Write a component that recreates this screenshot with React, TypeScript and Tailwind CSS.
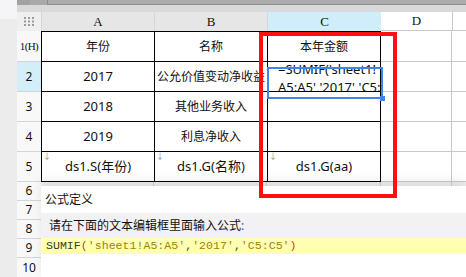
import React from 'react';

const rowHeights = [31, 30, 30, 30, 30];

function GridDots() {
    return (
        <svg width="11" height="9" viewBox="0 0 11 9">
            {[0, 4, 8].map((x) =>
                [0, 3.5, 7].map((y) => <rect key={`${x}-${y}`} x={x} y={y} width="2" height="2" fill="#9a9a9a" />)
            )}
        </svg>
    );
}

function DownMark() {
    return <span className="absolute left-[1px] top-0 text-[8px] leading-none text-[#8a8a8a]">↓</span>;
}

export default function App() {
    const headerFont = { fontFamily: '"Liberation Serif", serif' };

    const tabela = [
        ['年份', '名称', '本年金额'],
        ['2017', '公允价值变动净收益', ''],
        ['2018', '其他业务收入', ''],
        ['2019', '利息净收入', ''],
        ['ds1.S(年份)', 'ds1.G(名称)', 'ds1.G(aa)'],
    ];

    return (
        <div
            className="relative flex h-[277px] w-[466px] overflow-hidden bg-white text-[12px] text-[#111]"
            style={{ fontFamily: '"Noto Sans", "Noto Sans CJK SC", sans-serif' }}
        >
            {/* faixa esquerda */}
            <div className="flex w-[17px] flex-col bg-[#ececec]">
                <div className="h-[19px] bg-[#f5f5f7]" />
            </div>

            <div className="flex flex-1 flex-col">
                {/* barra superior */}
                <div className="flex h-[8px]">
                    <div className="w-[13px] bg-[#a2a2a2]" />
                    <div className="w-[17px] bg-[#a9a9a9]" />
                    <div className="flex-1 border-b border-l border-[#8c8c8c] bg-[#acacac]" />
                </div>
                <div className="h-[11px] bg-[#d9d9d9]" />

                {/* cabeçalho das colunas */}
                <div className="flex h-[19px]" style={headerFont}>
                    <div className="flex w-[24px] items-center justify-center bg-[#efefef]">
                        <GridDots />
                    </div>
                    <div className="flex w-[113px] items-center justify-center border-l border-[#d6d6d6] bg-[#e6e6e6] text-[13px]">A</div>
                    <div className="flex w-[113px] items-center justify-center border-l border-[#d6d6d6] bg-[#e6e6e6] text-[13px]">B</div>
                    <div className="flex w-[114px] items-center justify-center border-l border-[#d6d6d6] bg-[#cfeef9] text-[13px]">C</div>
                    <div className="flex w-[71px] items-center justify-center border-b border-[#c8c8c8] bg-white text-[13px]">D</div>
                    <div className="flex-1 border-b border-l border-[#c8c8c8] bg-white" />
                </div>

                <div className="flex flex-1">
                    {/* cabeçalho das linhas */}
                    <div className="flex w-[24px] flex-col bg-[#f8f8f8] text-[12px]">
                        <div className="flex h-[31px] items-center justify-center border-b border-[#d4d4d4] text-[11px] tracking-[-0.6px]" style={headerFont}>1(H)</div>
                        <div className="flex h-[30px] items-center justify-center border-b border-[#d4d4d4] bg-[#d3eef9]">2</div>
                        <div className="flex h-[30px] items-center justify-center border-b border-[#d4d4d4]">3</div>
                        <div className="flex h-[30px] items-center justify-center border-b border-[#d4d4d4]">4</div>
                        <div className="flex h-[30px] items-center justify-center border-b border-[#d4d4d4]">5</div>
                        <div className="flex h-[19px] items-center justify-center border-b border-[#d4d4d4]">6</div>
                        <div className="flex h-[19px] items-center justify-center border-b border-[#d4d4d4]">7</div>
                        <div className="flex h-[19px] items-center justify-center border-b border-[#d4d4d4]">8</div>
                        <div className="flex h-[19px] items-center justify-center border-b border-[#d4d4d4]">9</div>
                        <div className="flex flex-1 items-start justify-center pt-[1px]">10</div>
                    </div>

                    {/* tabela */}
                    <div className="flex flex-1 flex-col">
                        {tabela.map((linha, i) => (
                            <div key={i} className="flex" style={{ height: rowHeights[i] }}>
                                {linha.map((texto, j) => (
                                    <div
                                        key={j}
                                        className={`relative flex items-center justify-center overflow-hidden whitespace-nowrap border-b border-l border-black ${i === 0 ? 'border-t' : ''} ${j === 2 ? 'w-[114px] border-r' : 'w-[113px]'}`}
                                    >
                                        {i === 4 && <DownMark />}
                                        {i === 1 && j === 2 ? (
                                            <div className="absolute left-[10px] top-[-2px] text-[13px] leading-[18px]">
                                                <div>=SUMIF('sheet1!</div>
                                                <div>A5:A5','2017','C5:C5')</div>
                                            </div>
                                        ) : (
                                            <span className={/^[0-9]/.test(texto) || texto.startsWith('ds') ? 'text-[13px]' : ''}>{texto}</span>
                                        )}
                                    </div>
                                ))}
                                <div className="w-[71px] border-b border-r border-[#c8c8c8]" />
                                <div className="flex-1 border-b border-[#c8c8c8]" />
                            </div>
                        ))}
                        <div className="flex h-[4px] bg-[#eeeeee]">
                            <div className="w-[113px] border-r border-[#cfcfcf]" />
                            <div className="w-[113px] border-r border-[#cfcfcf]" />
                            <div className="w-[114px] border-r border-[#cfcfcf]" />
                            <div className="w-[71px] border-r border-[#cfcfcf]" />
                        </div>

                        {/* painel de definição da fórmula */}
                        <div className="relative flex flex-1 flex-col bg-white shadow-[0_-6px_10px_rgba(0,0,0,0.07)]">
                            <div className="flex h-[27px] items-center pl-[4px] text-[12px]">公式定义</div>
                            <div className="flex h-[25px] items-center bg-[#f2f2f5] pl-[8px] text-[12px]">
                                请在下面的文本编辑框里面输入公式<span className="text-[#6b3f8f]">:</span>
                            </div>
                            <div
                                className="flex h-[16px] items-center bg-[#ffffb4] pl-[5px] text-[11.6px] text-[#3d3d1c]"
                                style={{ fontFamily: '"Liberation Mono", monospace' }}
                            >
                                SUMIF<span className="text-[#e4301c]">(</span>
                                <span className="text-[#9a8600]">'sheet1!A5:A5'</span>,
                                <span className="text-[#9a8600]">'2017'</span>,
                                <span className="text-[#9a8600]">'C5:C5'</span>
                                <span className="text-[#e4301c]">)</span>
                            </div>
                            <div className="flex-1" />
                        </div>
                    </div>
                </div>
            </div>

            {/* seleção azul da célula C2 */}
            <div className="absolute left-[267px] top-[67px] h-[32px] w-[116px] border-2 border-[#3d85e6]">
                <div className="absolute bottom-[-4px] right-[-4px] h-[5px] w-[5px] bg-[#3d85e6]" />
            </div>

            {/* destaque vermelho */}
            <div className="absolute left-[259px] top-[32px] h-[166px] w-[138px] border-4 border-[#ff1010]" />
        </div>
    );
}
